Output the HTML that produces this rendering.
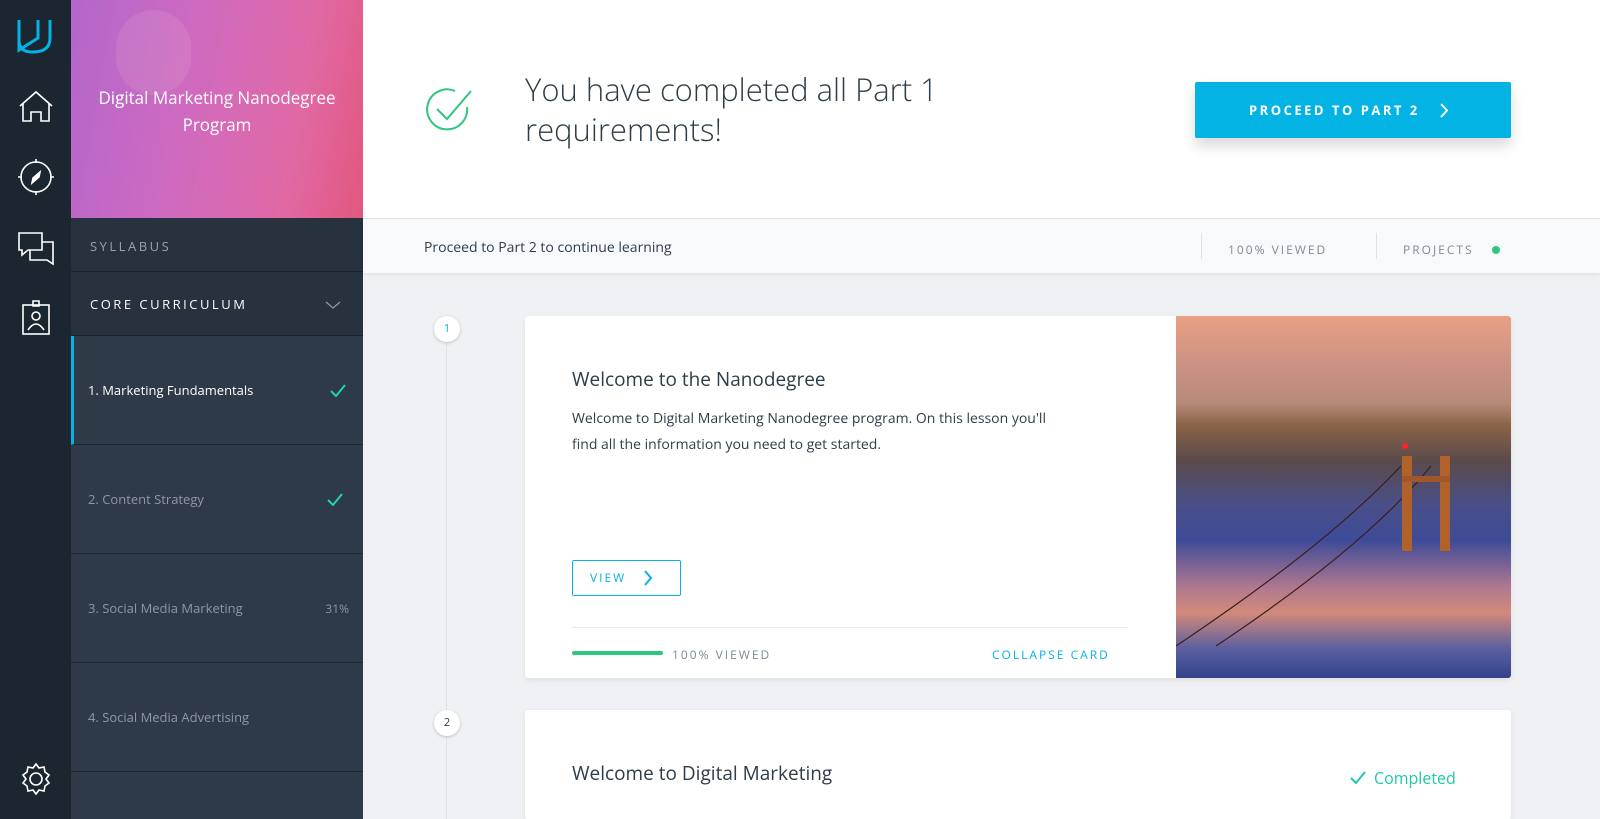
<!DOCTYPE html>
<html><head><style>
*{box-sizing:border-box;margin:0;padding:0}
html,body{width:1600px;height:819px;overflow:hidden}
body{background:#eff1f4;font-family:"Open Sans","Liberation Sans","DejaVu Sans",sans-serif;position:relative}
.rail{position:absolute;left:0;top:0;width:71px;height:819px;background:#1c2630}
.side{position:absolute;left:71px;top:0;width:292px;height:819px;background:#27323e;overflow:hidden}
.hero{position:absolute;left:0;top:0;width:292px;height:218px;background:linear-gradient(100deg,#b466cc 0%,#cf6ac0 40%,#e069a5 75%,#e2577e 100%);overflow:hidden}
.hero .t{position:absolute;left:0;right:0;top:84px;text-align:center;color:#fff;font-size:17px;line-height:27px}
.sy{position:absolute;top:218px;height:54px;width:292px;border-bottom:1px solid #1a232c;color:#9aa3ad;font-size:13px;letter-spacing:2.5px;padding:19px 0 0 19px}
.cc{position:absolute;top:273px;height:63px;width:292px;border-bottom:1px solid #1a232c;color:#fff;font-size:13px;letter-spacing:2.5px;padding:22px 0 0 19px}
.it{position:absolute;left:0;width:292px;height:109px;border-bottom:1px solid #1f2933;background:#2e3a47;font-size:13px;color:#8e98a3;padding:45px 0 0 17px}
.head{position:absolute;left:363px;top:0;width:1237px;height:219px;background:#fff;border-bottom:1px solid #dfe3e8}
.sub{position:absolute;left:363px;top:219px;width:1237px;height:54px;background:#f8f9fa;box-shadow:0 2px 4px rgba(0,0,0,.06)}
.card{position:absolute;left:525px;width:986px;background:#fff;border-radius:3px;box-shadow:0 2px 6px rgba(0,0,0,.08);overflow:hidden}
.circ{position:absolute;left:434px;width:26px;height:26px;border-radius:50%;background:#fff;box-shadow:0 1px 3px rgba(0,0,0,.2);font-size:11px;color:#02b3e4;text-align:center;line-height:26px}
</style></head><body>
<div class="rail">
<svg width="71" height="819" fill="none" stroke="#fff" stroke-width="1.6">
<path d="M19 20 L19 40 Q19 52 32 52 L33 52 Q50 52 50 38 L50 20" stroke="#02b3e4" stroke-width="3"/>
<path d="M19 24 L19 50 L38 38 L38 20" stroke="#02b3e4" stroke-width="3"/>
<path d="M20 106 L36 92 L52 106 M23 104 L23 121 L31 121 L31 112 L41 112 L41 121 L49 121 L49 104"/>
<circle cx="36" cy="177" r="15"/><path d="M36 159v4M36 191v4M18 177h4M50 177h4"/><path d="M40 172 L33 178 L32 183 L39 177Z" fill="#fff"/>
<path d="M19 233h23v17h-14l-6 5v-5h-3z"/><path d="M30 250v10h17l6 4v-4h0v-18h-11"/>
<rect x="23" y="305" width="26" height="29"/><circle cx="36" cy="316" r="4"/><path d="M28 330q8-12 16 0M33 301h6v5h-6z"/>
<circle cx="36" cy="779" r="6"/><path d="M36 764l3 4 5-1 1 5 4 3-3 4 3 4-4 3-1 5-5-1-3 4-3-4-5 1-1-5-4-3 3-4-3-4 4-3 1-5 5 1z"/>
</svg></div>
<div class="side">
<div class="hero"><div style="position:absolute;left:45px;top:10px;width:75px;height:85px;border-radius:38px;background:rgba(255,235,230,.1)"></div><div class="t">Digital Marketing Nanodegree<br>Program</div></div>
<div class="sy">SYLLABUS</div>
<div class="cc">CORE CURRICULUM<svg style="position:absolute;left:254px;top:28px" width="16" height="9" fill="none" stroke="#8e98a3" stroke-width="1.3"><path d="M1 1l7 6 7-6"/></svg></div>
<div class="it" style="top:336px;color:#fff;border-left:3px solid #02b3e4;padding-left:14px">1. Marketing Fundamentals<svg style="position:absolute;left:256px;top:48px" width="16" height="13" fill="none" stroke="#1fd3b5" stroke-width="2"><path d="M1 7l5 5 9-11"/></svg></div>
<div class="it" style="top:445px">2. Content Strategy<svg style="position:absolute;left:256px;top:48px" width="16" height="13" fill="none" stroke="#1fd3b5" stroke-width="2"><path d="M1 7l5 5 9-11"/></svg></div>
<div class="it" style="top:554px">3. Social Media Marketing<span style="position:absolute;right:14px;top:46px;font-size:12px">31%</span></div>
<div class="it" style="top:663px">4. Social Media Advertising</div>
<div class="it" style="top:772px"></div>
</div>
<div class="head">
<svg style="position:absolute;left:62px;top:87px" width="52" height="46" fill="none" stroke="#2fc77f" stroke-width="2"><path d="M42 20 A20 20 0 1 1 30 4"/><path d="M12 22l10 10 24-28"/></svg>
<div style="position:absolute;left:162px;top:70px;font-size:31px;line-height:40px;color:#2e3d49;font-weight:300">You have completed all Part 1<br>requirements!</div>
<div style="position:absolute;left:832px;top:82px;width:316px;height:56px;background:#02b3e4;border-radius:2px;box-shadow:0 8px 14px rgba(0,0,0,.15);color:#fff;font-size:13px;letter-spacing:2.5px;font-weight:bold;line-height:56px;padding-left:54px">PROCEED TO PART 2<svg style="position:absolute;left:244px;top:21px" width="10" height="15" fill="none" stroke="#fff" stroke-width="2"><path d="M2 1l6 6.5L2 14"/></svg></div>
</div>
<div class="sub">
<div style="position:absolute;left:61px;top:19px;font-size:14px;color:#2e3d49">Proceed to Part 2 to continue learning</div>
<div style="position:absolute;left:838px;top:14px;height:26px;border-left:1px solid #dbe2e8"></div>
<div style="position:absolute;left:865px;top:22px;font-size:12px;letter-spacing:2px;color:#7d8a96">100% VIEWED</div>
<div style="position:absolute;left:1013px;top:14px;height:26px;border-left:1px solid #dbe2e8"></div>
<div style="position:absolute;left:1040px;top:22px;font-size:12px;letter-spacing:2px;color:#7d8a96">PROJECTS</div>
<div style="position:absolute;left:1129px;top:27px;width:8px;height:8px;border-radius:50%;background:#2fc77f"></div>
</div>
<div style="position:absolute;left:446px;top:330px;width:1px;height:489px;background:#dbe2e8"></div>
<div class="circ" style="top:316px">1</div>
<div class="circ" style="top:710px;color:#2e3d49">2</div>
<div class="card" style="top:316px;height:362px">
<div style="position:absolute;left:47px;top:50px;font-size:19px;color:#2e3d49">Welcome to the Nanodegree</div>
<div style="position:absolute;left:47px;top:90px;width:500px;font-size:14px;line-height:26px;color:#2e3d49">Welcome to Digital Marketing Nanodegree program. On this lesson you'll find all the information you need to get started.</div>
<div style="position:absolute;left:47px;top:244px;width:109px;height:36px;border:1px solid #02b3e4;border-radius:2px;color:#02b3e4;font-size:12px;letter-spacing:2px;line-height:34px;padding-left:17px">VIEW<svg style="position:absolute;left:70px;top:9px" width="10" height="16" fill="none" stroke="#02b3e4" stroke-width="2"><path d="M2 1l6 7-6 7"/></svg></div>
<div style="position:absolute;left:47px;top:311px;width:556px;border-top:1px solid #e8ecef"></div>
<div style="position:absolute;left:47px;top:335px;width:91px;height:4px;border-radius:2px;background:#2fc77f"></div>
<div style="position:absolute;left:147px;top:330px;font-size:12px;letter-spacing:2px;color:#7d8a96">100% VIEWED</div>
<div style="position:absolute;left:467px;top:330px;font-size:12px;letter-spacing:2px;color:#02b3e4">COLLAPSE CARD</div>
<div style="position:absolute;left:651px;top:0;width:335px;height:362px;background:linear-gradient(180deg,#e9a084 0%,#c99083 15%,#b88a7a 24%,#8a6448 30%,#5a4a4a 40%,#4a4f88 52%,#3e4b98 62%,#b07890 75%,#d28a7a 82%,#5a5fa0 92%,#34438a 100%)">
<svg width="335" height="362" fill="none"><path d="M0 330 Q150 230 225 150 M40 330 Q190 230 255 150" stroke="#3a1e1e" stroke-width="1.2"/><rect x="226" y="140" width="10" height="95" fill="#b0622a"/><rect x="264" y="140" width="10" height="95" fill="#b0622a"/><rect x="226" y="160" width="48" height="6" fill="#a0582a"/><circle cx="229" cy="130" r="3" fill="#ff2030"/></svg></div>
</div>
<div class="card" style="top:710px;height:109px">
<div style="position:absolute;left:47px;top:50px;font-size:19px;color:#2e3d49">Welcome to Digital Marketing</div>
<svg style="position:absolute;left:825px;top:61px" width="16" height="13" fill="none" stroke="#1fc8a8" stroke-width="2"><path d="M1 7l5 5 9-11"/></svg>
<div style="position:absolute;left:849px;top:57px;font-size:16px;color:#1fc8a8">Completed</div>
</div>
</body></html>
